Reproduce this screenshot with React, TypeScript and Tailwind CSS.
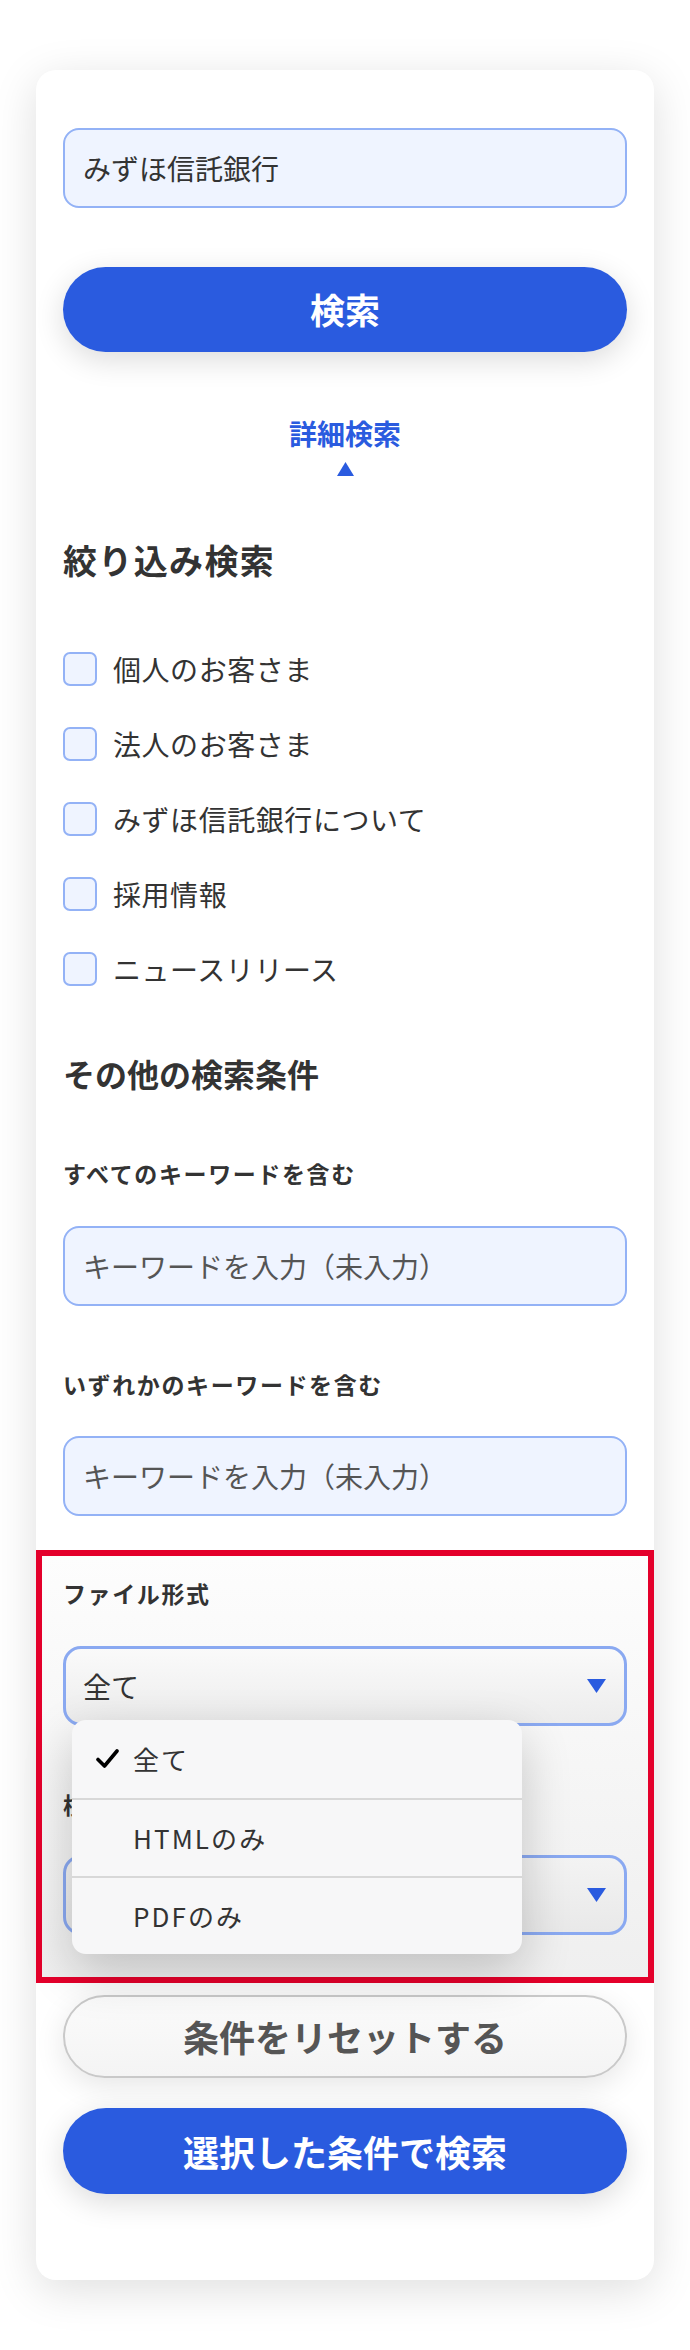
import { useState } from 'react'

const font = { fontFamily: '"Noto Sans CJK JP", "Noto Sans", sans-serif' }

const categories = ['個人のお客さま', '法人のお客さま', 'みずほ信託銀行について', '採用情報', 'ニュースリリース']

const fileTypes = ['全て', 'HTMLのみ', 'PDFのみ']

function TriangleDown() {
  return (
    <svg width="19" height="14" viewBox="0 0 19 14" className="shrink-0">
      <polygon points="0,0 19,0 9.5,14" fill="#2a5bdf" />
    </svg>
  )
}

export default function App() {
  const [checked, setChecked] = useState<boolean[]>(categories.map(() => false))
  const [fileType] = useState('全て')

  return (
    <div className="min-h-[2350px] bg-white pt-[70px]" style={font}>
      <div className="mx-[36px] w-[618px] rounded-[20px] bg-white px-[27px] pt-[58px] pb-[86px] shadow-[0_10px_45px_rgba(0,0,0,0.13)]">
        {/* Keyword */}
        <div className="flex h-[80px] items-center rounded-[16px] border-2 border-[#93b2f6] bg-[#eff4ff] px-[18px] text-[28px] text-[#333]">
          みずほ信託銀行
        </div>

        <button className="mt-[59px] flex h-[85px] w-full items-center justify-center rounded-full bg-[#2a5bdf] text-[35px] font-bold text-white shadow-[0_8px_30px_rgba(0,0,0,0.14)]">
          検索
        </button>

        {/* Toggle */}
        <div className="mt-[61px] flex flex-col items-center">
          <span className="h-[40px] text-[28px] leading-[40px] font-bold text-[#2a5bdf]">詳細検索</span>
          <svg width="17" height="14" viewBox="0 0 17 14" className="mt-[9px]">
            <polygon points="8.5,0 17,14 0,14" fill="#2a5bdf" />
          </svg>
        </div>

        {/* Narrowing */}
        <h2 className="mt-[62px] h-[44px] text-[34px] leading-[44px] font-bold tracking-[0.04em] text-[#333]">絞り込み検索</h2>
        <ul className="mt-[49px]">
          {categories.map((c, i) => (
            <li key={c} className="flex h-[75px] items-center">
              <button
                onClick={() => setChecked(checked.map((v, j) => (j === i ? !v : v)))}
                className="h-[34px] w-[34px] shrink-0 rounded-[7px] border-2 border-[#93b2f6] bg-[#eff4ff]"
              />
              <span className="ml-[16px] text-[28px] tracking-[0.02em] text-[#333]">{c}</span>
            </li>
          ))}
        </ul>

        {/* Other conditions */}
        <h2 className="mt-[44.5px] h-[44px] text-[32px] leading-[44px] font-bold text-[#333]">その他の検索条件</h2>

        <p className="mt-[62px] h-[32px] text-[23px] leading-[32px] font-bold tracking-[0.07em] text-[#333]">すべてのキーワードを含む</p>
        <div className="mt-[37px] flex h-[80px] items-center rounded-[16px] border-2 border-[#93b2f6] bg-[#eff4ff] px-[18px] text-[28px] text-[#555]">
          キーワードを入力（未入力）
        </div>

        <p className="mt-[62px] h-[32px] text-[23px] leading-[32px] font-bold tracking-[0.07em] text-[#333]">いずれかのキーワードを含む</p>
        <div className="mt-[36px] flex h-[80px] items-center rounded-[16px] border-2 border-[#93b2f6] bg-[#eff4ff] px-[18px] text-[28px] text-[#555]">
          キーワードを入力（未入力）
        </div>

        {/* Highlighted select area */}
        <div className="-mx-[27px] mt-[34px] border-[6px] border-[#e4002b] bg-gradient-to-b from-[#fdfdfd] to-[#efefef] px-[21px] pt-[21px] pb-[42px]">
          <p className="h-[32px] text-[23px] leading-[32px] font-bold tracking-[0.07em] text-[#333]">ファイル形式</p>
          <div className="relative mt-[37px]">
            <div className="flex h-[80px] items-center justify-between rounded-[18px] border-[3px] border-[#8aa9f1] bg-gradient-to-b from-[#fafafa] to-[#ececec] pr-[18px] pl-[17px] text-[28px] text-[#333]">
              <span>{fileType}</span>
              <TriangleDown />
            </div>

            {/* Open menu */}
            <ul className="absolute top-[74px] left-[9px] z-10 w-[450px] overflow-hidden rounded-[14px] bg-[#f7f7f8] shadow-[0_18px_50px_rgba(0,0,0,0.2)]">
              {fileTypes.map((t, i) => (
                <li
                  key={t}
                  className={`flex h-[78px] items-center text-[26px] tracking-[0.08em] text-[#333] ${i > 0 ? 'border-t-2 border-[#d8d8d8]' : ''}`}
                >
                  <span className="flex w-[61px] justify-end pr-[14px]">
                    {t === fileType && (
                      <svg width="23" height="20" viewBox="0 0 23 20">
                        <path d="M2 10.5 L8.5 17 L21 2" fill="none" stroke="#000" strokeWidth="3.6" strokeLinecap="round" strokeLinejoin="round" />
                      </svg>
                    )}
                  </span>
                  <span>{t}</span>
                </li>
              ))}
            </ul>
          </div>

          <p className="mt-[62px] h-[32px] text-[23px] leading-[32px] font-bold tracking-[0.07em] text-[#333]">検索結果の並び順</p>
          <div className="mt-[35px] flex h-[80px] items-center justify-between rounded-[18px] border-[3px] border-[#8aa9f1] bg-gradient-to-b from-[#f3f3f3] to-[#e9e9e9] pr-[18px] pl-[17px] text-[28px] text-[#333]">
            <span>新着順</span>
            <TriangleDown />
          </div>
        </div>

        <button className="mt-[12px] flex h-[83px] w-full items-center justify-center rounded-full border-2 border-[#c9c9c9] bg-gradient-to-b from-[#fbfbfb] to-[#f4f4f4] text-[36px] font-bold text-[#555] shadow-[0_8px_30px_rgba(0,0,0,0.1)]">
          条件をリセットする
        </button>

        <button className="mt-[30px] flex h-[86px] w-full items-center justify-center rounded-full bg-[#2a5bdf] text-[36px] font-bold text-white shadow-[0_8px_30px_rgba(0,0,0,0.14)]">
          選択した条件で検索
        </button>
      </div>
    </div>
  )
}
